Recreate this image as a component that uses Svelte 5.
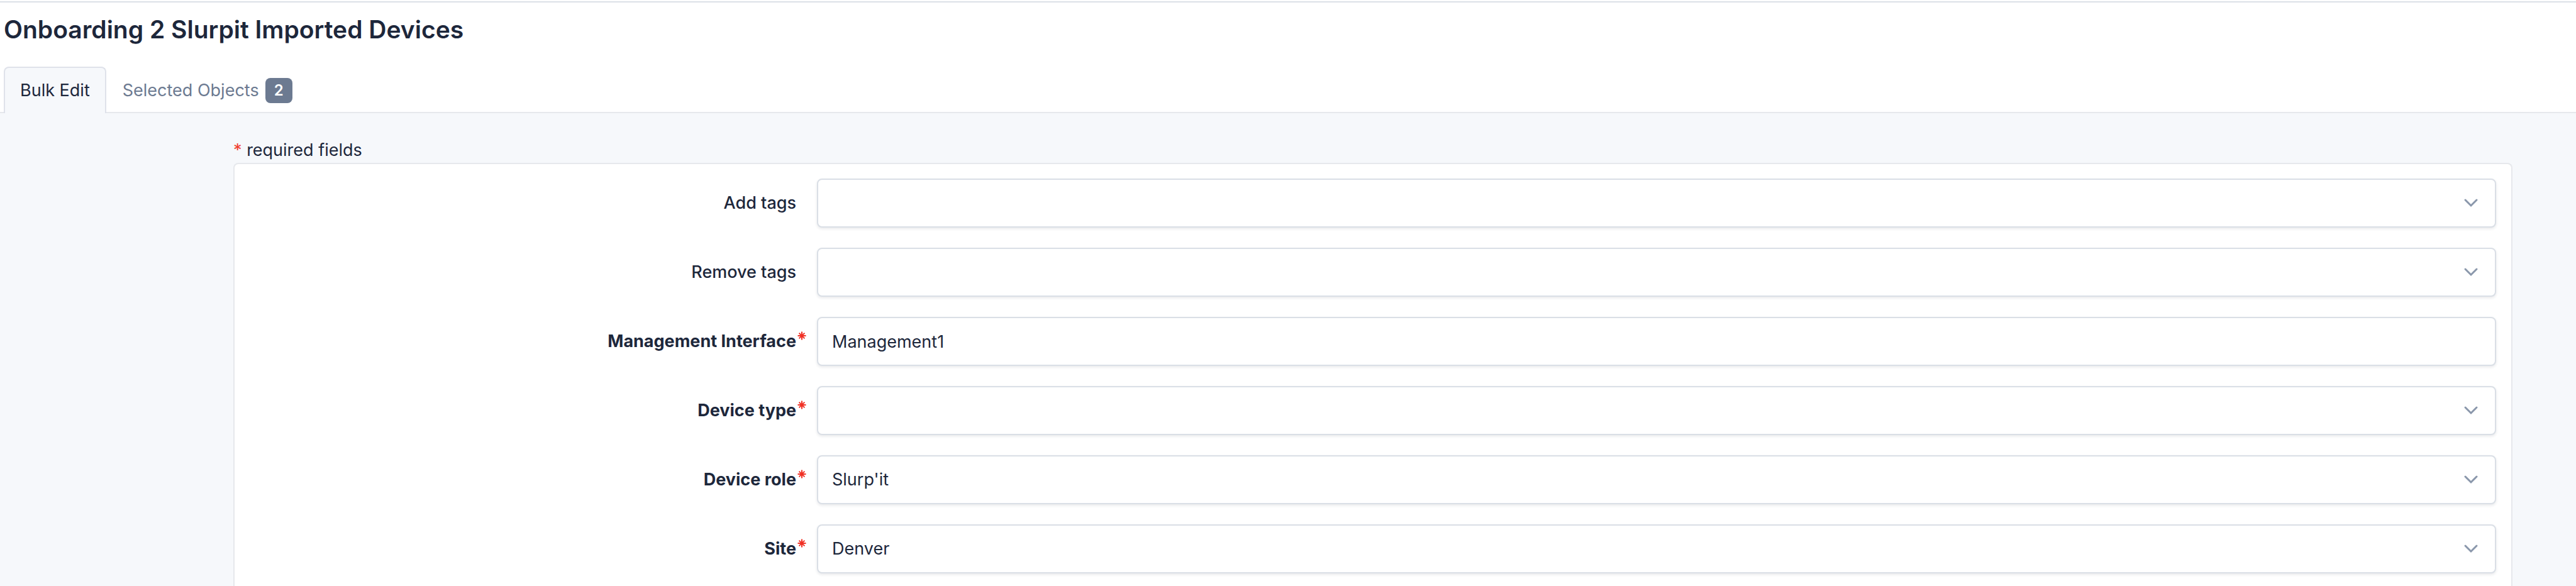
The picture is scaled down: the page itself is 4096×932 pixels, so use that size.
<script>
  const fields = [
    { id: 'add-tags', label: 'Add tags', value: '', kind: 'select' },
    { id: 'remove-tags', label: 'Remove tags', value: '', kind: 'select' },
    { id: 'management-interface', label: 'Management Interface', value: 'Management1', kind: 'text', required: true },
    { id: 'device-type', label: 'Device type', value: '', kind: 'select', required: true },
    { id: 'device-role', label: 'Device role', value: "Slurp'it", kind: 'select', required: true },
    { id: 'site', label: 'Site', value: 'Denver', kind: 'select', required: true }
  ];
</script>

<div class="page">
  <header>
    <h1>Onboarding 2 Slurpit Imported Devices</h1>
    <nav class="tabs">
      <button class="tab active" type="button">Bulk Edit</button>
      <button class="tab" type="button">Selected Objects <span class="badge">2</span></button>
    </nav>
  </header>

  <main>
    <p class="note"><span class="star">*</span> required fields</p>
    <form class="card">
      {#each fields as field (field.id)}
        <div class="row">
          <label for={field.id} class:required={field.required}>
            {field.label}
            {#if field.required}
              <svg class="mark" viewBox="0 0 14 14" aria-hidden="true">
                <path d="M7 0.5V13.5M0.5 7H13.5M2.6 2.6L11.4 11.4M11.4 2.6L2.6 11.4" />
              </svg>
            {/if}
          </label>
          {#if field.kind === 'select'}
            <div class="control">
              <select id={field.id}>
                <option>{field.value}</option>
              </select>
              <svg class="chevron" viewBox="0 0 24 16" aria-hidden="true">
                <path d="M3 3L12 12L21 3" />
              </svg>
            </div>
          {:else}
            <div class="control">
              <input id={field.id} type="text" value={field.value} />
            </div>
          {/if}
        </div>
      {/each}
    </form>
  </main>
</div>

<style>
  :global(body) {
    margin: 0;
    overflow: hidden;
  }
  .page {
    box-sizing: border-box;
    height: 100vh;
    display: flex;
    flex-direction: column;
    padding-top: 2px;
    background: #fff;
    color: #1d273b;
    font-family: Inter, sans-serif;
    font-size: 27px;
    line-height: 40px;
  }
  header {
    border-top: 2px solid #dce1e7;
    padding-top: 19px;
  }
  h1 {
    margin: 0;
    padding-left: 6px;
    font-size: 39px;
    line-height: 48px;
    font-weight: 600;
  }
  .tabs {
    display: flex;
    padding: 35px 6px 0;
    border-bottom: 2px solid #e6e8ec;
  }
  .tab {
    box-sizing: border-box;
    height: 74px;
    margin-bottom: -2px;
    padding: 0 24px;
    border: 2px solid transparent;
    border-bottom: 0;
    border-radius: 8px 8px 0 0;
    background: none;
    color: #6c7a91;
    font: inherit;
    display: flex;
    align-items: center;
    gap: 10px;
  }
  .tab.active {
    border-color: #dfe2ea;
    background: #f6f8fb;
    color: #1d273b;
  }
  .badge {
    box-sizing: border-box;
    min-width: 43px;
    padding: 0 12px;
    border-radius: 8px;
    background: #6c7a91;
    color: #fff;
    font-size: 24px;
    font-weight: 600;
    line-height: 40px;
    text-align: center;
  }
  main {
    flex: 1;
    min-height: 0;
    display: flex;
    flex-direction: column;
    padding: 39px 101px 0 371px;
    background: #f6f8fb;
  }
  .note {
    margin: 0;
  }
  .star {
    color: #f03e2e;
  }
  .card {
    flex: 1;
    padding: 23px 24px 0;
    border: 2px solid #e6e8ec;
    border-bottom: 0;
    border-radius: 8px 8px 0 0;
    background: #fff;
    display: flex;
    flex-direction: column;
    gap: 32px;
  }
  .row {
    display: grid;
    grid-template-columns: 1fr 3fr;
    column-gap: 12px;
  }
  label {
    position: relative;
    align-self: center;
    padding-right: 21px;
    text-align: right;
    font-weight: 500;
  }
  label.required {
    font-weight: 700;
  }
  .mark {
    position: absolute;
    top: 4px;
    right: 5px;
    width: 14px;
    height: 14px;
    fill: none;
    stroke: #f03024;
    stroke-width: 2;
  }
  .control {
    position: relative;
  }
  input,
  select {
    display: block;
    box-sizing: border-box;
    width: 100%;
    height: 78px;
    padding: 0 22px;
    border: 2px solid #dadfe6;
    border-radius: 8px;
    background: #fff;
    box-shadow: 0 2px 4px rgba(29, 39, 59, 0.1);
    color: #1d273b;
    font: inherit;
    appearance: none;
  }
  .chevron {
    position: absolute;
    top: 31px;
    right: 28px;
    width: 24px;
    height: 16px;
    fill: none;
    stroke: #8a97ab;
    stroke-width: 3;
    stroke-linecap: round;
    pointer-events: none;
  }
</style>
